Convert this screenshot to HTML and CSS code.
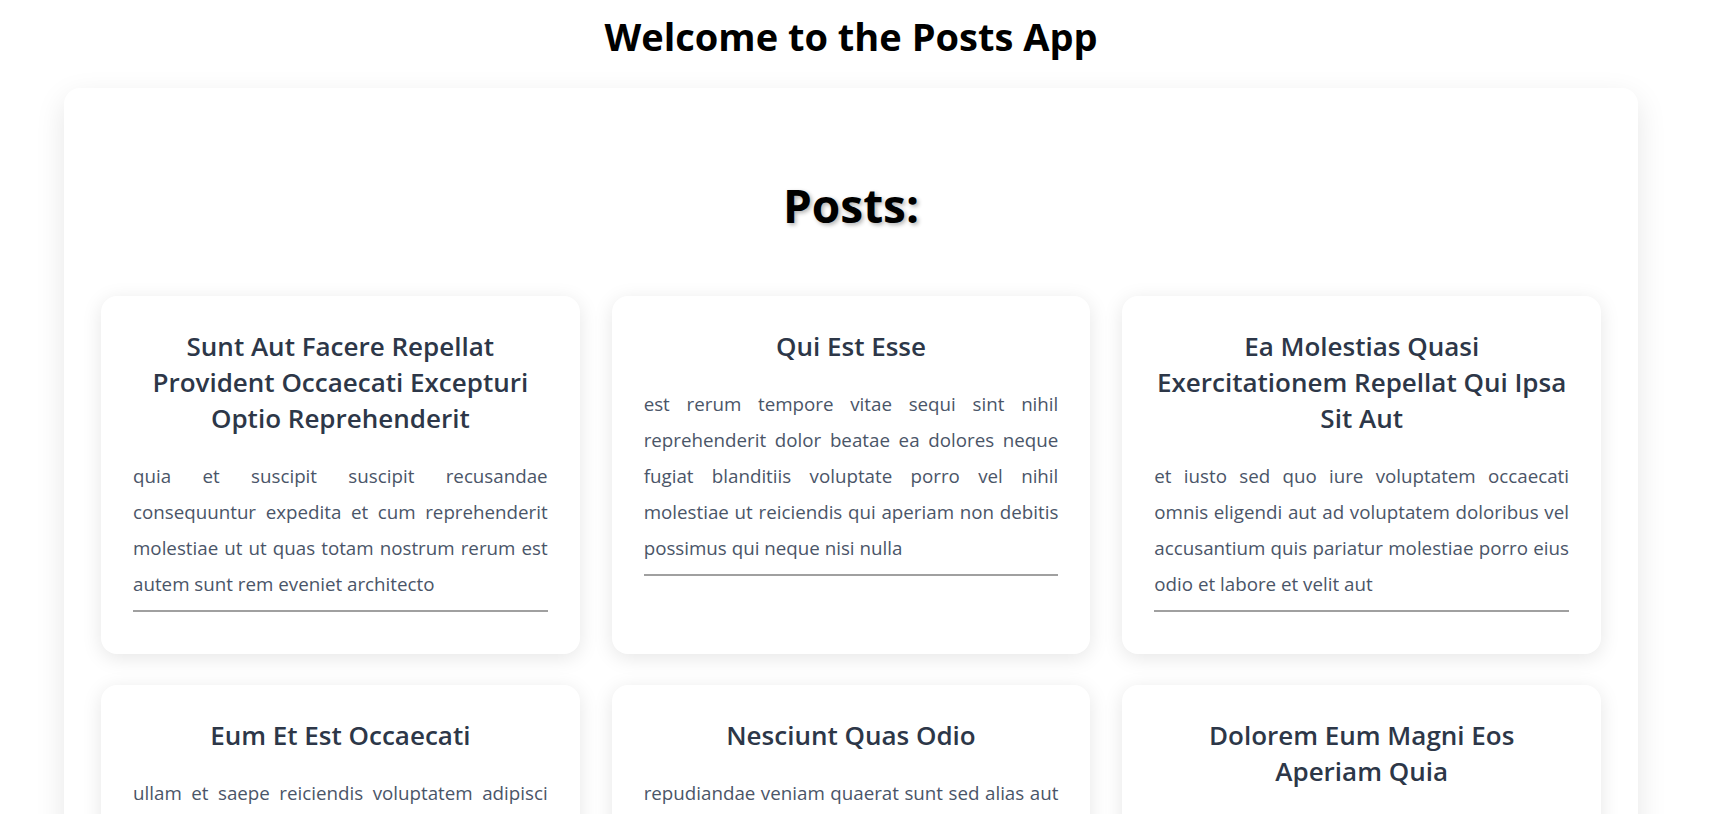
FILE: index.html
```html
<!DOCTYPE html>
<html lang="en">
<head>
<meta charset="utf-8">
<title>Posts App</title>
<link rel="stylesheet" href="styles.css">
</head>
<body>
<div class="page">
  <h1 class="app-title">Welcome to the Posts App</h1>
  <main class="container">
    <h2 class="posts-heading">Posts:</h2>
    <div class="grid">
      <article class="card">
        <h3 class="card-title">sunt aut facere repellat provident occaecati excepturi optio reprehenderit</h3>
        <p class="card-body">quia et suscipit suscipit recusandae consequuntur expedita et cum reprehenderit molestiae ut ut quas totam nostrum rerum est autem sunt rem eveniet architecto</p>
        <hr class="card-rule">
      </article>
      <article class="card">
        <h3 class="card-title">qui est esse</h3>
        <p class="card-body">est rerum tempore vitae sequi sint nihil reprehenderit dolor beatae ea dolores neque fugiat blanditiis voluptate porro vel nihil molestiae ut reiciendis qui aperiam non debitis possimus qui neque nisi nulla</p>
        <hr class="card-rule">
      </article>
      <article class="card">
        <h3 class="card-title">ea molestias quasi exercitationem repellat qui ipsa sit aut</h3>
        <p class="card-body">et iusto sed quo iure voluptatem occaecati omnis eligendi aut ad voluptatem doloribus vel accusantium quis pariatur molestiae porro eius odio et labore et velit aut</p>
        <hr class="card-rule">
      </article>
      <article class="card">
        <h3 class="card-title">eum et est occaecati</h3>
        <p class="card-body">ullam et saepe reiciendis voluptatem adipisci sit amet autem assumenda provident rerum culpa quis hic commodi nesciunt rem tenetur doloremque ipsam iure quis sunt voluptatem rerum illo velit</p>
        <hr class="card-rule">
      </article>
      <article class="card">
        <h3 class="card-title">nesciunt quas odio</h3>
        <p class="card-body">repudiandae veniam quaerat sunt sed alias aut fugiat sit autem sed est voluptatem omnis possimus esse voluptatibus quis est aut tenetur dolor neque</p>
        <hr class="card-rule">
      </article>
      <article class="card">
        <h3 class="card-title">dolorem eum magni eos aperiam quia</h3>
        <p class="card-body">ut aspernatur corporis harum nihil quis provident sequi mollitia nobis aliquid molestiae perspiciatis et ea nemo ab reprehenderit accusantium quas voluptate dolores velit et doloremque molestiae</p>
        <hr class="card-rule">
      </article>
    </div>
  </main>
</div>
</body>
</html>
```

FILE: styles.css
```css
* { box-sizing: border-box; }

body {
  margin: 0;
  background: #ffffff;
  font-family: "Open Sans", "Noto Sans", sans-serif;
  color: #000;
}

.page {
  width: 1702px;
}

.app-title {
  margin: 12px 0 28px;
  font-size: 38px;
  line-height: 48px;
  font-weight: 700;
  text-align: center;
  color: #000;
}

.container {
  margin: 0 64px 40px;
  background: #fff;
  border-radius: 16px;
  box-shadow: 0 10px 30px rgba(0, 0, 0, 0.1);
  padding: 88px 37px 40px;
}

.posts-heading {
  margin: 0 0 62px;
  font-size: 46px;
  line-height: 58px;
  font-weight: 700;
  text-align: center;
  color: #000;
  text-shadow: 2px 2px 4px rgba(0, 0, 0, 0.3);
}

.grid {
  display: grid;
  grid-template-columns: repeat(3, 1fr);
  gap: 31px 32px;
}

.card {
  background: #fff;
  border-radius: 16px;
  box-shadow: 0 4px 20px rgba(0, 0, 0, 0.1);
  padding: 32px;
}

.card-title {
  margin: 0 0 22px;
  font-size: 26px;
  line-height: 36px;
  font-weight: 600;
  text-align: center;
  text-transform: capitalize;
  color: #2d3748;
}

.card-body {
  margin: 0;
  font-size: 18.75px;
  line-height: 36px;
  text-align: justify;
  color: #4a5568;
}

.card-rule {
  margin: 8px 0 10px;
  border: 0;
  border-top: 2px solid #a0a0a0;
}
```
